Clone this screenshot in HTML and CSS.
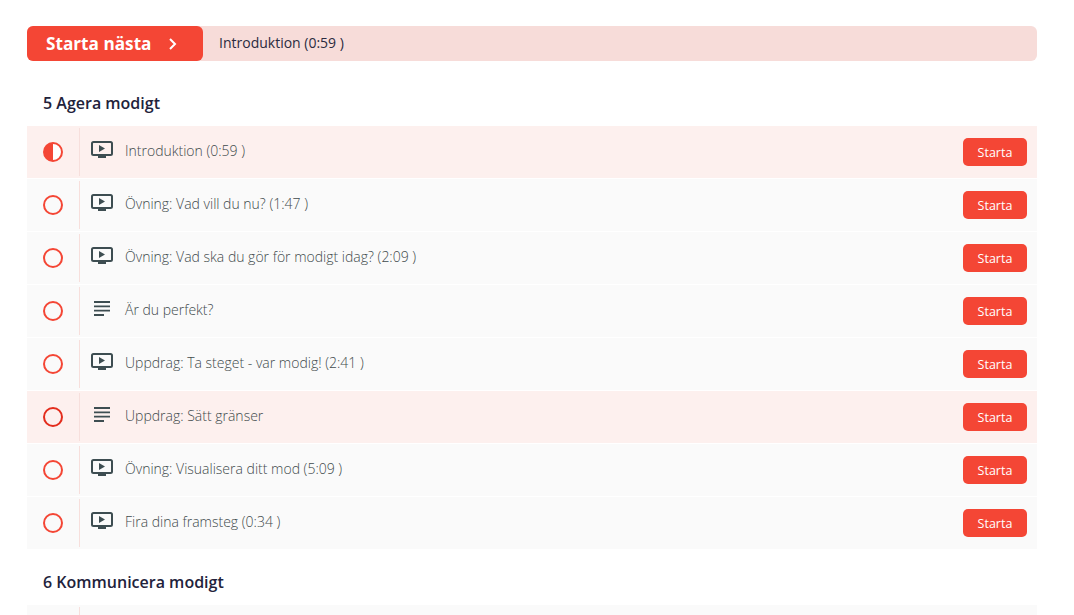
FILE: index.html
```html
<!DOCTYPE html>
<html lang="sv">

<head>
  <meta charset="utf-8" />
  <title>Agera modigt</title>
  <link rel="stylesheet" href="styles.css">
</head>

<body>
  <svg class="icon_defs" width="0" height="0">
    <symbol id="icon_video" viewBox="0 0 22 18">
      <rect x="1" y="1" width="20" height="13" rx="1.5" fill="none" stroke="currentColor" stroke-width="2" />
      <path d="M8 4v7l6-3.5z" fill="currentColor" />
      <rect x="7" y="15" width="8" height="2" fill="currentColor" />
    </symbol>
    <symbol id="icon_text" viewBox="0 0 16 15">
      <path d="M0 1h16M0 5.3h16M0 9.6h16M0 14h10" fill="none" stroke="currentColor" stroke-width="1.8" />
    </symbol>
  </svg>

  <div class="container">
    <div class="next_bar">
      <a class="next_btn">Starta nästa
        <svg class="next_arrow" width="10" height="14" viewBox="0 0 10 14">
          <path d="M2 2l5 5-5 5" fill="none" stroke="#fff" stroke-width="2" />
        </svg>
      </a>
      <span class="next_title">Introduktion (0:59 )</span>
    </div>

    <h2 class="section_title">5 Agera modigt</h2>
    <ul class="lessons">
      <li class="lesson active">
        <div class="lesson_status"><span class="circle half"></span></div>
        <div class="lesson_main">
          <svg class="icon video"><use href="#icon_video" /></svg>
          <span class="lesson_name">Introduktion (0:59 )</span>
        </div>
        <a class="start_btn">Starta</a>
      </li>
      <li class="lesson">
        <div class="lesson_status"><span class="circle"></span></div>
        <div class="lesson_main">
          <svg class="icon video"><use href="#icon_video" /></svg>
          <span class="lesson_name">Övning: Vad vill du nu? (1:47 )</span>
        </div>
        <a class="start_btn">Starta</a>
      </li>
      <li class="lesson">
        <div class="lesson_status"><span class="circle"></span></div>
        <div class="lesson_main">
          <svg class="icon video"><use href="#icon_video" /></svg>
          <span class="lesson_name">Övning: Vad ska du gör för modigt idag? (2:09 )</span>
        </div>
        <a class="start_btn">Starta</a>
      </li>
      <li class="lesson">
        <div class="lesson_status"><span class="circle"></span></div>
        <div class="lesson_main">
          <svg class="icon text"><use href="#icon_text" /></svg>
          <span class="lesson_name">Är du perfekt?</span>
        </div>
        <a class="start_btn">Starta</a>
      </li>
      <li class="lesson">
        <div class="lesson_status"><span class="circle"></span></div>
        <div class="lesson_main">
          <svg class="icon video"><use href="#icon_video" /></svg>
          <span class="lesson_name">Uppdrag: Ta steget - var modig! (2:41 )</span>
        </div>
        <a class="start_btn">Starta</a>
      </li>
      <li class="lesson active">
        <div class="lesson_status"><span class="circle dark"></span></div>
        <div class="lesson_main">
          <svg class="icon text"><use href="#icon_text" /></svg>
          <span class="lesson_name">Uppdrag: Sätt gränser</span>
        </div>
        <a class="start_btn">Starta</a>
      </li>
      <li class="lesson">
        <div class="lesson_status"><span class="circle"></span></div>
        <div class="lesson_main">
          <svg class="icon video"><use href="#icon_video" /></svg>
          <span class="lesson_name">Övning: Visualisera ditt mod (5:09 )</span>
        </div>
        <a class="start_btn">Starta</a>
      </li>
      <li class="lesson">
        <div class="lesson_status"><span class="circle"></span></div>
        <div class="lesson_main">
          <svg class="icon video"><use href="#icon_video" /></svg>
          <span class="lesson_name">Fira dina framsteg (0:34 )</span>
        </div>
        <a class="start_btn">Starta</a>
      </li>
    </ul>

    <h2 class="section_title second">6 Kommunicera modigt</h2>
    <ul class="lessons">
      <li class="lesson">
        <div class="lesson_status"></div>
        <div class="lesson_main"></div>
      </li>
    </ul>
  </div>
</body>

</html>
```

FILE: styles.css
```css
html,
body {
  height: 100%;
  overflow: hidden;
}

body {
  margin: 0;
  background: #fff;
  font-family: "Open Sans", sans-serif;
  color: #22223b;
}

.icon_defs {
  display: block;
  height: 0;
}

.container {
  padding: 26px 37px 0 27px;
}

.next_bar {
  display: flex;
  align-items: center;
  height: 35px;
  background: #f7dcd9;
  border-radius: 6px;
}

.next_btn {
  display: flex;
  align-items: center;
  box-sizing: border-box;
  width: 176px;
  height: 35px;
  padding-left: 19px;
  background: #f44635;
  border-radius: 6px;
  color: #fff;
  font-size: 17.2px;
  font-weight: 700;
}

.next_arrow {
  margin-left: 17px;
}

.next_title {
  margin-top: -2px;
  margin-left: 16px;
  font-size: 14px;
  color: #2b2b40;
}

.section_title {
  margin: 0;
  padding: 32px 0 13px 16px;
  font-size: 16px;
  line-height: 20px;
  font-weight: 600;
}

.section_title.second {
  padding-top: 22px;
}

.lessons {
  margin: 0;
  padding: 0;
  list-style: none;
}

.lesson {
  display: flex;
  align-items: center;
  height: 52px;
  margin-bottom: 1px;
  background: #fafafa;
}

.lesson.active {
  background: #fdf0ee;
}

.lesson_status {
  display: flex;
  justify-content: center;
  align-items: center;
  box-sizing: border-box;
  width: 53px;
  height: 48px;
  border-right: 1px solid #f7dfdc;
}

.circle {
  box-sizing: border-box;
  width: 20px;
  height: 20px;
  border: 2px solid #f44635;
  border-radius: 50%;
}

.circle.half {
  background: linear-gradient(90deg, #f44635 50%, #fff 50%);
}

.circle.dark {
  border-color: #e32c1c;
}

.lesson_main {
  display: flex;
  flex: 1;
  align-items: center;
  height: 100%;
  font-size: 14px;
  font-weight: 300;
  color: #3f4a4c;
}

.icon {
  flex: none;
  margin-top: -4px;
  color: #3d4d51;
}

.icon.video {
  width: 22px;
  height: 18px;
  margin-left: 11px;
  margin-right: 12px;
}

.icon.text {
  width: 16px;
  height: 15px;
  margin-top: -6px;
  margin-left: 14px;
  margin-right: 15px;
}

.lesson_name {
  margin-top: -3px;
}

.start_btn {
  flex: none;
  width: 64px;
  height: 28px;
  margin-right: 10px;
  background: #f44635;
  border-radius: 5px;
  color: #fff;
  font-size: 12.5px;
  font-weight: 500;
  line-height: 29px;
  text-align: center;
}
```
